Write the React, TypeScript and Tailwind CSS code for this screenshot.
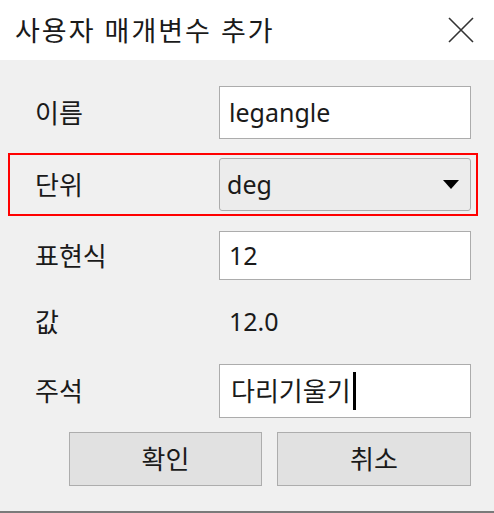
import React from 'react';

const FONT = { fontFamily: '"Noto Sans", "Noto Sans CJK KR", sans-serif' };

export default function App() {
  return (
    <div className="w-[494px] h-[513px] bg-[#f0f0f0] flex flex-col text-[#1a1a1a] overflow-hidden" style={FONT}>
      {/* title bar */}
      <div className="h-[60px] bg-white flex items-center justify-between pl-[15px] pr-[20px]">
        <span className="text-[27px] leading-none tracking-[2px]">사용자 매개변수 추가</span>
        <svg width="26" height="26" viewBox="0 0 26 26" className="text-[#333]">
          <path d="M1 1 L25 25 M25 1 L1 25" stroke="currentColor" strokeWidth="1.6" fill="none" />
        </svg>
      </div>

      <div className="flex flex-col px-[8px] w-[486px]">
        {/* 이름 */}
        <div className="flex items-center pl-[27px] pr-[7px] mt-[26px]">
          <span className="w-[184px] text-[26px] leading-none">이름</span>
          <div className="w-[252px] h-[53px] bg-white border border-[#acacac] flex items-center px-[9px] text-[25px]">
            legangle
          </div>
        </div>

        {/* 단위 */}
        <div className="flex items-center border-2 border-[#ff0000] pl-[25px] pr-[5px] py-[3px] mt-[14px]">
          <span className="w-[184px] text-[26px] leading-none">단위</span>
          <div className="w-[252px] h-[53px] bg-[#ececec] border border-[#acacac] rounded-[3px] flex items-center justify-between pl-[7px] pr-[11px] text-[25px]">
            <span>deg</span>
            <svg width="16" height="9" viewBox="0 0 16 9">
              <path d="M0 0 H16 L8 9 Z" fill="#000" />
            </svg>
          </div>
        </div>

        {/* 표현식 */}
        <div className="flex items-center pl-[27px] pr-[7px] mt-[15px]">
          <span className="w-[184px] text-[26px] leading-none">표현식</span>
          <div className="w-[252px] h-[49px] bg-white border border-[#acacac] flex items-center px-[9px] text-[25px]">
            12
          </div>
        </div>

        {/* 값 */}
        <div className="flex items-center pl-[27px] pr-[7px] mt-[22px] h-[40px]">
          <span className="w-[184px] text-[26px] leading-none">값</span>
          <span className="pl-[10px] text-[25px]">12.0</span>
        </div>

        {/* 주석 */}
        <div className="flex items-center pl-[27px] pr-[7px] mt-[22px]">
          <span className="w-[184px] text-[26px] leading-none">주석</span>
          <div className="w-[252px] h-[54px] bg-white border border-[#acacac] flex items-center pl-[11px] pr-[9px] text-[26px] leading-none">
            <span>다리기울기</span>
            <span className="inline-block w-[3px] h-[38px] bg-black ml-[2px]" />
          </div>
        </div>

        {/* buttons */}
        <div className="flex pl-[61px] gap-[15px] mt-[14px]">
          <button className="w-[193px] h-[54px] bg-[#e1e1e1] border border-[#adadad] text-[26px] leading-none">확인</button>
          <button className="w-[194px] h-[54px] bg-[#e1e1e1] border border-[#adadad] text-[26px] leading-none">취소</button>
        </div>
      </div>

      <div className="mt-auto h-[2px] bg-[#7a7a7a]" />
    </div>
  );
}
